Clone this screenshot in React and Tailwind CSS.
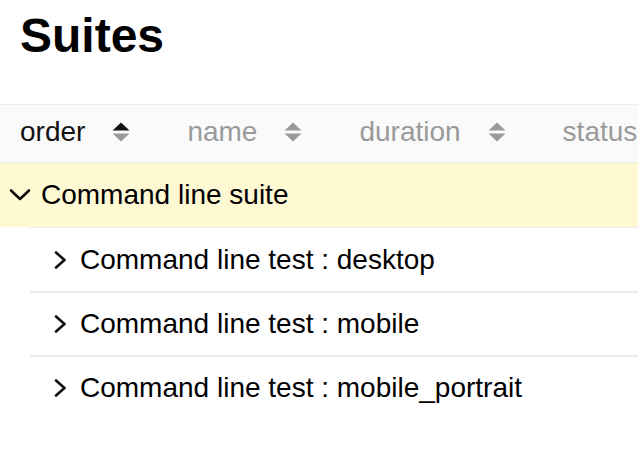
import React from 'react';

const font = { fontFamily: '"Liberation Sans", Arial, Helvetica, sans-serif' };

function SortIcon({ active }) {
  return (
    <svg width="18" height="21" viewBox="0 0 18 21" className="shrink-0">
      <polygon points="9,0.5 17.5,8.5 0.5,8.5" fill={active ? '#111111' : '#9a9a9a'} />
      <polygon points="0.5,11.5 17.5,11.5 9,19.5" fill="#9a9a9a" />
    </svg>
  );
}

function ChevronDown() {
  return (
    <svg width="22" height="14" viewBox="0 0 22 14" className="shrink-0">
      <path d="M2 2.5 L11 11 L20 2.5" fill="none" stroke="#111" strokeWidth="2.6" strokeLinecap="round" strokeLinejoin="round" />
    </svg>
  );
}

function ChevronRight() {
  return (
    <svg width="14" height="18" viewBox="0 0 14 18" className="shrink-0">
      <path d="M3 1.5 L11.5 9 L3 16.5" fill="none" stroke="#111" strokeWidth="2.6" strokeLinecap="round" strokeLinejoin="round" />
    </svg>
  );
}

const columns = [
  { label: 'order', active: true },
  { label: 'name' },
  { label: 'duration' },
  { label: 'status' },
];

const tests = ['Command line test : desktop', 'Command line test : mobile', 'Command line test : mobile_portrait'];

export default function App() {
  return (
    <div className="w-[638px] h-[456px] bg-white overflow-hidden text-black" style={font}>
      <h1 className="pl-[20px] mt-[8px] text-[48px] leading-[56px] font-bold">Suites</h1>

      <div className="mt-[40px] h-[59px] pb-[3px] flex items-center bg-[#fafafa] border-y border-[#ebebeb] whitespace-nowrap">
        {columns.map(col => (
          <div key={col.label} className="flex items-center gap-[27px] pl-[20px] pr-[37px] shrink-0">
            <span className={`text-[28px] ${col.active ? 'text-[#111]' : 'text-[#9a9a9a]'}`}>{col.label}</span>
            <SortIcon active={col.active} />
          </div>
        ))}
      </div>

      <div className="h-[64px] flex items-center gap-[10px] pl-[9px] bg-[#fef8d3]">
        <ChevronDown />
        <span className="text-[28px]">Command line suite</span>
      </div>

      {tests.map((t, i) => (
        <div key={t} className={`ml-[30px] h-[64px] flex items-center gap-[13px] pl-[23px] ${i > 0 ? 'border-t-2' : 'border-t'} border-[#ececec]`}>
          <ChevronRight />
          <span className="text-[28px]">{t}</span>
        </div>
      ))}
    </div>
  );
}
